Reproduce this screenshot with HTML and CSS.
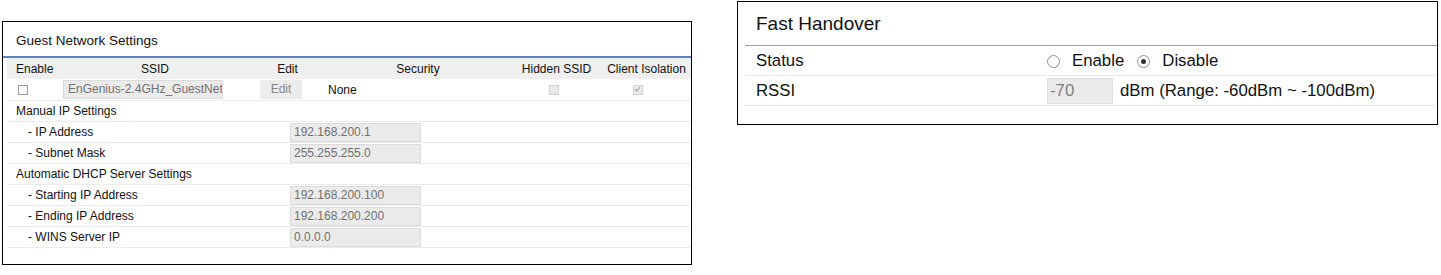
FILE: index.html
```html
<!DOCTYPE html>
<html lang="en">
<head>
    <meta charset="UTF-8">
    <title>Guest Network / Fast Handover</title>
    <link rel="stylesheet" href="styles.css">
</head>
<body>

    <!-- Guest network panel -->
    <section class="panel guest">
        <h2 class="panel-title">Guest Network Settings</h2>
        <div class="table">
            <div class="cols head">
                <span class="c-enable">Enable</span>
                <span class="center">SSID</span>
                <span class="center">Edit</span>
                <span class="center">Security</span>
                <span class="center">Hidden SSID</span>
                <span class="center">Client Isolation</span>
            </div>
            <div class="cols line">
                <span class="c-enable"><i class="check"></i></span>
                <span><span class="field ssid">EnGenius-2.4GHz_GuestNet</span></span>
                <span><span class="btn">Edit</span></span>
                <span class="security">None</span>
                <span class="hidden-cb"><i class="check off"></i></span>
                <span class="iso-cb"><i class="check off on"></i></span>
            </div>
            <div class="row"><span class="label">Manual IP Settings</span></div>
            <div class="row"><span class="label sub">- IP Address</span><span class="field ip">192.168.200.1</span></div>
            <div class="row"><span class="label sub">- Subnet Mask</span><span class="field ip">255.255.255.0</span></div>
            <div class="row"><span class="label">Automatic DHCP Server Settings</span></div>
            <div class="row"><span class="label sub">- Starting IP Address</span><span class="field ip">192.168.200.100</span></div>
            <div class="row"><span class="label sub">- Ending IP Address</span><span class="field ip">192.168.200.200</span></div>
            <div class="row"><span class="label sub">- WINS Server IP</span><span class="field ip">0.0.0.0</span></div>
        </div>
    </section>

    <!-- Fast handover panel -->
    <section class="panel handover">
        <h2 class="panel-title">Fast Handover</h2>
        <div class="table">
            <div class="row">
                <span class="label">Status</span>
                <span class="radio"></span><span class="opt">Enable</span>
                <span class="radio checked"></span><span class="opt">Disable</span>
            </div>
            <div class="row">
                <span class="label">RSSI</span>
                <span class="field rssi">-70</span>
                <span class="unit">dBm (Range: -60dBm ~ -100dBm)</span>
            </div>
        </div>
    </section>

</body>
</html>
```

FILE: styles.css
```css
/* General */
body {
    margin: 0;
    font-family: "Liberation Sans", Arial, sans-serif;
    color: #111;
    background: #fff;
    display: flex;
    align-items: flex-start;
}

.panel {
    box-sizing: border-box;
    border: 1px solid #000;
}

.panel-title {
    margin: 0;
    font-weight: normal;
}

.field {
    box-sizing: border-box;
    display: block;
    background: #ebebeb;
    border: 1px solid #dcdcdc;
    color: #707070;
    white-space: nowrap;
    overflow: hidden;
}

/* Guest network */
.guest {
    margin: 21px 0 0 2px;
    width: 690px;
    height: 244px;
    font-size: 12px;
}

.guest .panel-title {
    font-size: 13.5px;
    line-height: 20px;
    padding: 9px 0 5px 13px;
    border-bottom: 2px solid #5b80c6;
}

.guest .table {
    margin-left: 4px;
}

.cols {
    display: grid;
    grid-template-columns: 53px 190px 75px 186px 91px 89px;
    align-items: center;
    height: 21px;
}

.cols.head {
    background: #efefef;
}

.cols.line {
    border-bottom: 1px solid #ececec;
}

.center {
    text-align: center;
}

.c-enable {
    padding-left: 9px;
}

.line .c-enable {
    padding-left: 11px;
    display: flex;
}

.field.ssid {
    margin-left: 3px;
    width: 160px;
    height: 19px;
    line-height: 17px;
    padding-left: 4px;
}

.btn {
    display: block;
    margin-left: 10px;
    width: 42px;
    height: 19px;
    line-height: 19px;
    text-align: center;
    background: #ececec;
    color: #858585;
}

.security {
    padding-left: 3px;
}

.hidden-cb {
    display: flex;
    padding-left: 38px;
}

.iso-cb {
    display: flex;
    padding-left: 31px;
}

.check {
    box-sizing: border-box;
    display: block;
    width: 10px;
    height: 10px;
    border: 1px solid #9a9a9a;
    background: #fff;
    position: relative;
}

.check.off {
    border-color: #d2d2d2;
    background: #e9e9e9;
}

.check.on::after {
    content: "";
    position: absolute;
    left: 2px;
    top: 0px;
    width: 2px;
    height: 4px;
    border: solid #9d9d9d;
    border-width: 0 1.5px 1.5px 0;
    transform: rotate(40deg);
}

.guest .row {
    display: flex;
    align-items: center;
    height: 20px;
    border-bottom: 1px solid #ececec;
}

.guest .label {
    width: 283px;
    padding-left: 9px;
    box-sizing: border-box;
}

.guest .label.sub {
    padding-left: 21px;
}

.field.ip {
    width: 131px;
    height: 19px;
    line-height: 17px;
    padding-left: 3px;
}

/* Fast handover */
.handover {
    margin: 1px 0 0 45px;
    width: 701px;
    height: 124px;
    font-size: 16.8px;
}

.handover .panel-title {
    font-size: 19px;
    line-height: 26px;
    padding: 9px 0 8px 18px;
}

.handover .table {
    margin-left: 7px;
    border-top: 1px solid #89a5d6;
}

.handover .row {
    display: flex;
    align-items: center;
    height: 29px;
    border-bottom: 1px solid #e9e9e9;
}

.handover .label {
    box-sizing: border-box;
    width: 301px;
    padding-left: 11px;
}

.radio {
    box-sizing: border-box;
    width: 13px;
    height: 13px;
    margin: 2px 0 0 1px;
    border: 1px solid #8c8c8c;
    border-radius: 50%;
    background: #fff;
    position: relative;
}

.radio.checked::after {
    content: "";
    position: absolute;
    left: 3px;
    top: 3px;
    width: 5px;
    height: 5px;
    border-radius: 50%;
    background: #333;
}

.opt {
    margin-left: 12px;
    margin-right: 12px;
}

.field.rssi {
    margin-left: 1px;
    width: 66px;
    height: 26px;
    line-height: 24px;
    padding-left: 2px;
    border-color: #e0e0e0;
    color: #808080;
}

.unit {
    margin-left: 7px;
}
```
